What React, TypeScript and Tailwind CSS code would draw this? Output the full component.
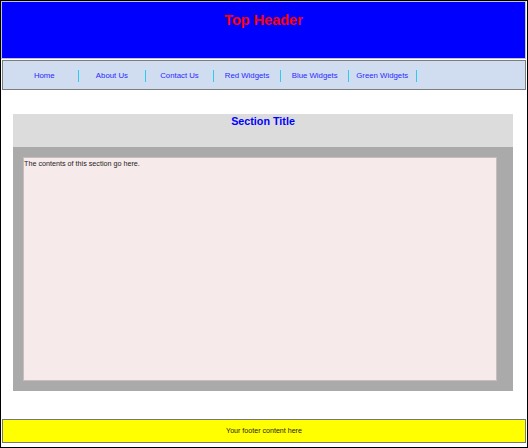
const navItems = ["Home", "About Us", "Contact Us", "Red Widgets", "Blue Widgets", "Green Widgets"];

export default function App() {
  return (
    <div
      className="w-[528px] h-[448px] border border-black bg-white flex flex-col"
      style={{ fontFamily: '"Liberation Sans", Arial, sans-serif' }}
    >
      {/* header */}
      <header className="h-[58px] mr-px border border-[#c4c4c4] bg-[#0000ff] pt-[10px] text-center">
        <h1 className="text-[14.5px] leading-[16px] font-bold text-[#ff0000]">Top Header</h1>
      </header>

      {/* nav */}
      <nav className="mt-px mx-px h-[30px] border border-[#7d7d7d] bg-[#d0dcef] flex items-center pl-[8px] pt-px">
        {navItems.map((item) => (
          <div key={item} className="flex items-center">
            <span className="w-[66.6px] text-center text-[7.8px] leading-[10px] text-[#2a2aff]">{item}</span>
            <span className="w-px h-[12px] bg-[#2ccbef]"></span>
          </div>
        ))}
      </nav>

      {/* section */}
      <section className="mt-[24px] ml-[12px] w-[500px]">
        <div className="h-[33px] bg-[#dcdcdc] text-center">
          <h2 className="text-[10.75px] leading-[12px] pt-px font-bold text-[#0000ff]">Section Title</h2>
        </div>
        <div className="h-[244px] bg-[#aaaaaa] p-[10px] flex">
          <div className="w-[474px] border border-[#c8bcbc] bg-[#f6eaea] pt-px text-[7.2px] leading-[9px] text-[#222222]">
            The contents of this section go here.
          </div>
        </div>
      </section>

      {/* footer */}
      <footer className="mt-[28px] mx-px h-[24px] border border-[#777777] bg-[#ffff00] flex items-center justify-center">
        <p className="text-[7.1px] leading-[9px] text-[#222222]">Your footer content here</p>
      </footer>
    </div>
  );
}
